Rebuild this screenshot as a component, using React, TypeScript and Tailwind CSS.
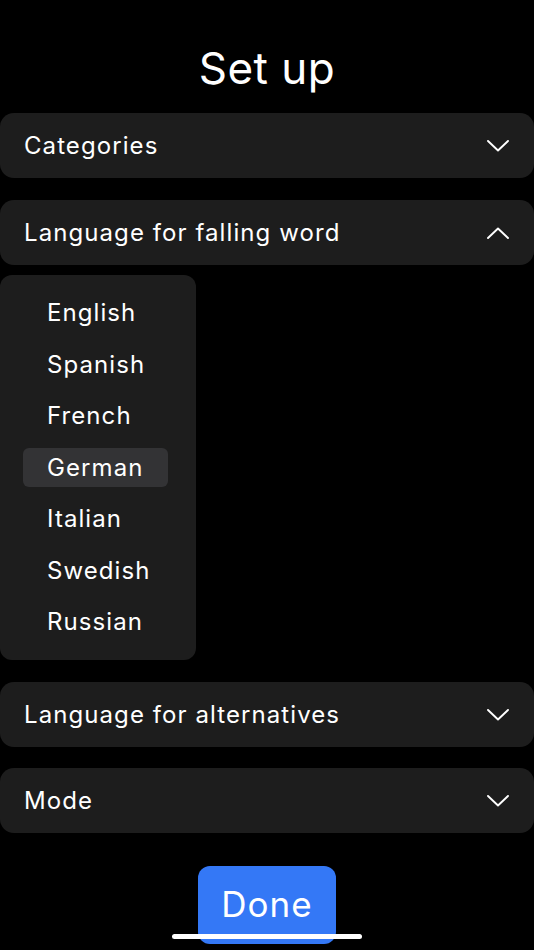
import React from 'react'

const languages = ['English', 'Spanish', 'French', 'German', 'Italian', 'Swedish', 'Russian']

const Chevron = ({ up }: { up?: boolean }) => (
  <svg width="22" height="12" viewBox="0 0 22 12" fill="none" className="shrink-0">
    <path
      d={up ? 'M1 11L11 1.5L21 11' : 'M1 1L11 10.5L21 1'}
      stroke="white"
      strokeWidth="1.9"
      strokeLinecap="round"
      strokeLinejoin="round"
    />
  </svg>
)

const Section = ({ title, open }: { title: string; open?: boolean }) => (
  <div className="flex h-[65px] items-center justify-between rounded-[14px] bg-[#1d1d1d] pl-6 pr-[25px]">
    <span className="text-[24px] tracking-[0.045em] text-white">{title}</span>
    <Chevron up={open} />
  </div>
)

export default function App() {
  const selected = 'German'

  return (
    <div
      className="flex h-[950px] w-[534px] flex-col overflow-hidden bg-black"
      style={{ fontFamily: 'Inter, "Noto Sans", sans-serif' }}
    >
      <h1 className="pt-[40px] pb-[17px] text-center text-[44px] leading-[56px] font-normal tracking-[0.01em] text-white">
        Set up
      </h1>

      <Section title="Categories" />

      <div className="mt-[22px]">
        <Section title="Language for falling word" open />
      </div>

      {/* dropdown */}
      <div className="mt-[10px] flex w-[196px] flex-col gap-[12.5px] rounded-[12px] bg-[#1d1d1d] px-[23px] py-[18.5px]">
        {languages.map((lang) => (
          <div
            key={lang}
            className={`flex h-[39px] w-[145px] items-center rounded-[6px] pl-6 text-[24px] tracking-[0.045em] text-white ${
              lang === selected ? 'bg-[#333335]' : ''
            }`}
          >
            {lang}
          </div>
        ))}
      </div>

      <div className="mt-[22px]">
        <Section title="Language for alternatives" />
      </div>

      <div className="mt-[21px]">
        <Section title="Mode" />
      </div>

      <div className="relative mt-[33px] flex justify-center">
        <button className="h-[78px] w-[138px] rounded-[12px] bg-[#3478f6] pb-[2px] text-[35px] tracking-[0.03em] text-white">
          Done
        </button>
        <div className="absolute top-[68px] left-[172px] h-[5px] w-[190px] rounded-full bg-white" />
      </div>
    </div>
  )
}
